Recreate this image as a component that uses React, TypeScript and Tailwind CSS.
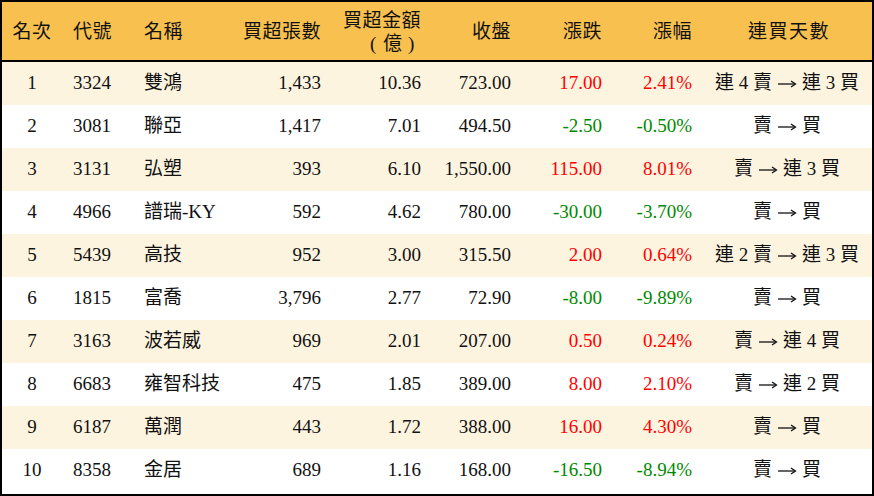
const rows = [
  { rank: 1, code: "3324", name: "雙鴻", lots: "1,433", amount: "10.36", close: "723.00", chg: "17.00", pct: "2.41%", streak: "連 4 賣 → 連 3 買" },
  { rank: 2, code: "3081", name: "聯亞", lots: "1,417", amount: "7.01", close: "494.50", chg: "-2.50", pct: "-0.50%", streak: "賣 → 買" },
  { rank: 3, code: "3131", name: "弘塑", lots: "393", amount: "6.10", close: "1,550.00", chg: "115.00", pct: "8.01%", streak: "賣 → 連 3 買" },
  { rank: 4, code: "4966", name: "譜瑞-KY", lots: "592", amount: "4.62", close: "780.00", chg: "-30.00", pct: "-3.70%", streak: "賣 → 買" },
  { rank: 5, code: "5439", name: "高技", lots: "952", amount: "3.00", close: "315.50", chg: "2.00", pct: "0.64%", streak: "連 2 賣 → 連 3 買" },
  { rank: 6, code: "1815", name: "富喬", lots: "3,796", amount: "2.77", close: "72.90", chg: "-8.00", pct: "-9.89%", streak: "賣 → 買" },
  { rank: 7, code: "3163", name: "波若威", lots: "969", amount: "2.01", close: "207.00", chg: "0.50", pct: "0.24%", streak: "賣 → 連 4 買" },
  { rank: 8, code: "6683", name: "雍智科技", lots: "475", amount: "1.85", close: "389.00", chg: "8.00", pct: "2.10%", streak: "賣 → 連 2 買" },
  { rank: 9, code: "6187", name: "萬潤", lots: "443", amount: "1.72", close: "388.00", chg: "16.00", pct: "4.30%", streak: "賣 → 買" },
  { rank: 10, code: "8358", name: "金居", lots: "689", amount: "1.16", close: "168.00", chg: "-16.50", pct: "-8.94%", streak: "賣 → 買" },
];

const cols = "grid grid-cols-[60px_72px_97px_100px_100px_90px_91px_90px_170px]";

function Arrow() {
  return (
    <svg width="20" height="10" viewBox="0 0 20 10" className="inline-block align-middle mx-[5px]" aria-label="→">
      <line x1="1" y1="5" x2="18" y2="5" stroke="#111" strokeWidth="1.3" />
      <path d="M14 2 L18.5 5 L14 8" fill="none" stroke="#111" strokeWidth="1.3" />
    </svg>
  );
}

function Streak({ text }: { text: string }) {
  const [from, to] = text.split(" → ");
  return (
    <span className="inline-flex items-center">
      <span>{from}</span>
      <Arrow />
      <span>{to}</span>
    </span>
  );
}

export default function App() {
  return (
    <div className="w-[874px] h-[496px] border-2 border-black bg-white text-[#111] text-[19px] font-['Liberation_Serif','Noto_Sans_CJK_TC',serif]">
      {/* Header */}
      <div className={`${cols} h-[60px] bg-[#f8c04f] border-b-2 border-black items-center leading-[23px] tracking-[0.5px]`}>
        <div className="text-center">名次</div>
        <div className="pl-[11px]">代號</div>
        <div className="pl-[10px]">名稱</div>
        <div className="text-right pr-[10px]">買超張數</div>
        <div className="flex flex-col items-end pr-[10px] pt-[2px]">
          <span>買超金額</span>
          <span className="flex">
            <span className="w-[19px] text-center">(</span>
            <span className="w-[19px] text-center">億</span>
            <span className="w-[19px] text-center">)</span>
          </span>
        </div>
        <div className="text-right pr-[10px]">收盤</div>
        <div className="text-right pr-[10px]">漲跌</div>
        <div className="text-right pr-[10px]">漲幅</div>
        <div className="text-center pl-[4px] tracking-[1.5px]">連買天數</div>
      </div>

      {/* Rows */}
      {rows.map((r, i) => {
        const color = r.chg.startsWith("-") ? "text-[#008a00]" : "text-[#ff0000]";
        return (
          <div
            key={r.rank}
            className={`${cols} h-[43px] items-center ${i % 2 === 0 ? "bg-[#fdf4e0]" : "bg-white"}`}
          >
            <div className="text-center">{r.rank}</div>
            <div className="pl-[11px]">{r.code}</div>
            <div className="pl-[10px] whitespace-nowrap">{r.name}</div>
            <div className="text-right pr-[10px]">{r.lots}</div>
            <div className="text-right pr-[10px]">{r.amount}</div>
            <div className="text-right pr-[10px]">{r.close}</div>
            <div className={`text-right pr-[10px] ${color}`}>{r.chg}</div>
            <div className={`text-right pr-[10px] ${color}`}>{r.pct}</div>
            <div className="text-center whitespace-nowrap">
              <Streak text={r.streak} />
            </div>
          </div>
        );
      })}
    </div>
  );
}
